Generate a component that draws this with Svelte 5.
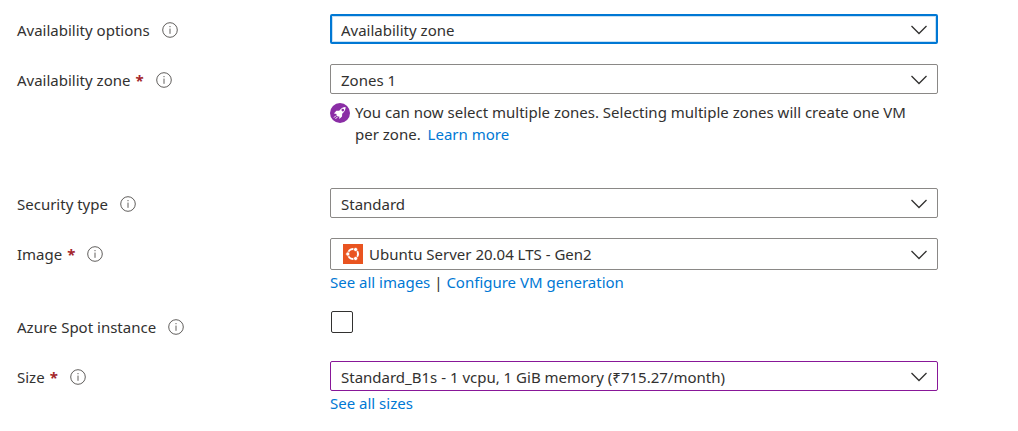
<script>
  let availability = $state("Availability zone");
  let zone = $state("Zones 1");
  let security = $state("Standard");
  let image = $state("Ubuntu Server 20.04 LTS - Gen2");
  let spot = $state(false);
  let size = $state("Standard_B1s - 1 vcpu, 1 GiB memory (₹715.27/month)");
</script>

{#snippet label(id, text, required)}
  <div class="label">
    <label for={id}>{text}{#if required}<span class="required">*</span>{/if}</label>
    <svg class="info" viewBox="0 0 16 16" aria-hidden="true">
      <circle cx="8" cy="8" r="7.3" />
      <path d="M8 6.6v5.2M8 4v1.2" />
    </svg>
  </div>
{/snippet}

{#snippet chevron()}
  <svg class="chevron" viewBox="0 0 16 10" aria-hidden="true">
    <path d="M0.5 1L8 8.5L15.5 1" />
  </svg>
{/snippet}

<main>
  <div class="row">
    {@render label("availability", "Availability options", false)}
    <div class="field">
      <div class="dropdown">
        <select id="availability" class="active" bind:value={availability}>
          <option>Availability zone</option>
          <option>No infrastructure redundancy required</option>
        </select>
        {@render chevron()}
      </div>
    </div>
  </div>

  <div class="row">
    {@render label("zone", "Availability zone", true)}
    <div class="field">
      <div class="dropdown">
        <select id="zone" bind:value={zone}>
          <option>Zones 1</option>
          <option>Zones 2</option>
          <option>Zones 3</option>
        </select>
        {@render chevron()}
      </div>
      <div class="hint">
        <svg class="rocket" viewBox="0 0 20 20" aria-hidden="true">
          <circle cx="10" cy="10" r="10" fill="#8a2da5" />
          <path
            fill="#fff"
            fill-rule="evenodd"
            d="M15.6 4.1C12.8 4.2 10.9 5.5 9.2 7.7L6.4 7.8L3.9 10.6L6.8 10.9L6.2 12L8 13.8L9.2 13.2L9.4 16.1L12 13.6L12.2 10.8C14.4 9 15.6 7 15.6 4.1ZM12.8 5.8A1.3 1.3 0 1 1 12.8 8.4A1.3 1.3 0 1 1 12.8 5.8Z"
          />
          <path fill="none" stroke="#fff" stroke-width="1" d="M6 12.6L4 14.6M7.4 14L5.5 15.9" />
        </svg>
        <p>
          <span>You can now select multiple zones. Selecting multiple zones will create one VM per zone.</span>
          <a class="more" href="#learn">Learn more</a>
        </p>
      </div>
    </div>
  </div>

  <div class="row">
    {@render label("security", "Security type", false)}
    <div class="field">
      <div class="dropdown">
        <select id="security" bind:value={security}>
          <option>Standard</option>
          <option>Trusted launch virtual machines</option>
        </select>
        {@render chevron()}
      </div>
    </div>
  </div>

  <div class="row">
    {@render label("image", "Image", true)}
    <div class="field">
      <div class="dropdown">
        <select id="image" class="with-logo" bind:value={image}>
          <option>Ubuntu Server 20.04 LTS - Gen2</option>
        </select>
        <svg class="logo" viewBox="0 0 20 20" aria-hidden="true">
          <rect width="20" height="20" fill="#e95420" />
          <circle cx="10" cy="10" r="5" fill="none" stroke="#fff" stroke-width="2" />
          <g fill="#fff" stroke="#e95420" stroke-width="0.8">
            <circle cx="4.8" cy="10" r="2.1" />
            <circle cx="12.6" cy="5.5" r="2.1" />
            <circle cx="12.6" cy="14.5" r="2.1" />
          </g>
        </svg>
        {@render chevron()}
      </div>
      <div class="links">
        <a href="#images">See all images</a> | <a href="#generation">Configure VM generation</a>
      </div>
    </div>
  </div>

  <div class="row">
    {@render label("spot", "Azure Spot instance", false)}
    <div class="field">
      <input id="spot" type="checkbox" bind:checked={spot} />
    </div>
  </div>

  <div class="row">
    {@render label("size", "Size", true)}
    <div class="field">
      <div class="dropdown">
        <select id="size" class="changed" bind:value={size}>
          <option>Standard_B1s - 1 vcpu, 1 GiB memory (₹715.27/month)</option>
        </select>
        {@render chevron()}
      </div>
      <div class="links">
        <a href="#sizes">See all sizes</a>
      </div>
    </div>
  </div>
</main>

<style>
  :global(body) {
    background: #fff;
  }

  main {
    display: flex;
    flex-direction: column;
    gap: 20px;
    padding: 14px 80px 14px 17px;
    color: #323130;
    font-family: "Segoe UI", "Noto Sans", "Open Sans", sans-serif;
    font-size: 15px;
    line-height: 22px;
  }

  .row {
    display: grid;
    grid-template-columns: 313px 1fr;
    align-items: start;
  }

  .label {
    display: flex;
    align-items: center;
    gap: 12px;
    box-sizing: border-box;
    height: 30px;
    padding-top: 2px;
  }

  .required {
    margin-left: 5px;
    color: #a4262c;
    font-weight: bold;
  }

  .info {
    width: 16px;
    height: 16px;
    fill: none;
    stroke: #605e5c;
    stroke-width: 1;
  }

  .dropdown {
    display: grid;
    align-items: center;
  }

  .dropdown > :global(*) {
    grid-area: 1 / 1;
  }

  select {
    appearance: none;
    width: 100%;
    height: 30px;
    padding: 2px 40px 0 10px;
    border: 1px solid #8a8886;
    border-radius: 2px;
    background: #fff;
    color: inherit;
    font: inherit;
  }

  select.active {
    padding-left: 9px;
    border: 2px solid #0078d4;
    outline: none;
    box-shadow: inset 0 0 0 1px #c7e0f4;
  }

  select.changed {
    border-color: #881798;
  }

  select.with-logo {
    height: 32px;
    padding-top: 0;
    padding-left: 38px;
  }

  .chevron {
    justify-self: end;
    width: 16px;
    height: 10px;
    margin: 2px 11px 0 0;
    fill: none;
    stroke: #323130;
    stroke-width: 1.3;
    pointer-events: none;
  }

  .logo {
    width: 20px;
    height: 20px;
    margin-left: 13px;
    pointer-events: none;
  }

  .hint {
    display: flex;
    gap: 5px;
    margin: 7px 0 23px;
  }

  .hint p {
    margin: 0;
    padding-right: 12px;
  }

  .more {
    margin-left: 3px;
  }

  .rocket {
    flex: none;
    width: 20px;
    height: 20px;
    margin-top: 2px;
  }

  .links {
    margin-top: 3px;
    line-height: 18px;
  }

  a {
    color: #0078d4;
    text-decoration: none;
  }

  a:hover {
    text-decoration: underline;
  }

  input[type="checkbox"] {
    appearance: none;
    display: block;
    width: 22px;
    height: 22px;
    margin: 0 1px;
    border: 1px solid #323130;
    border-radius: 2px;
    background: #fff;
  }

  input[type="checkbox"]:checked {
    background: #0078d4;
  }
</style>
